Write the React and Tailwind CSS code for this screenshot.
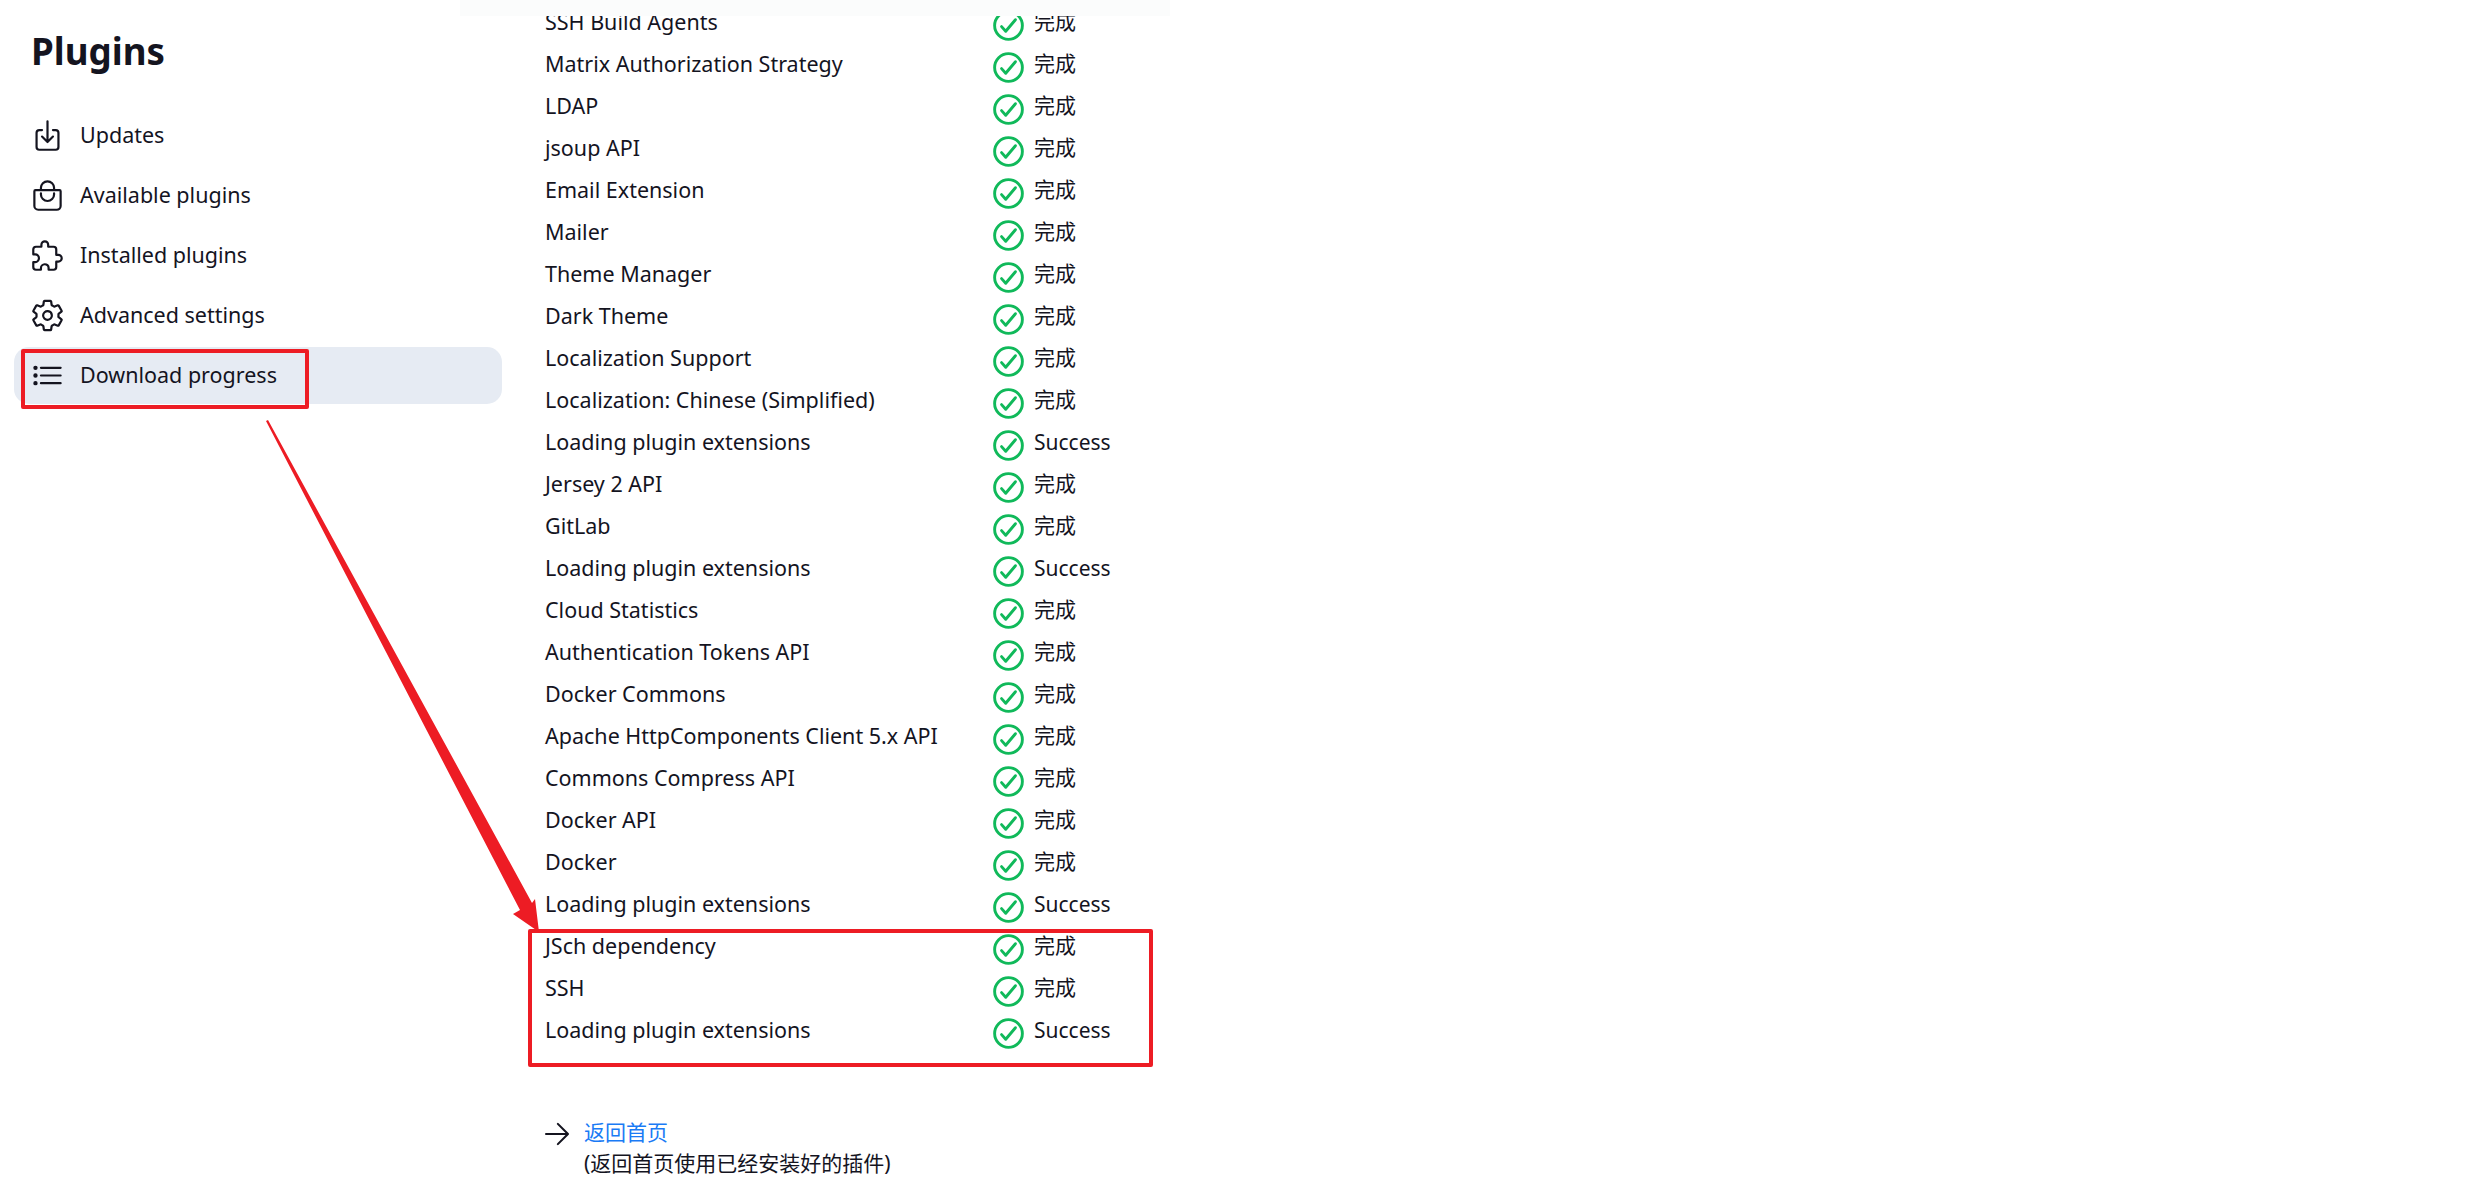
import React from 'react';
import {
  IoArrowForward,
  IoBagHandleOutline,
  IoCheckmarkCircleOutline,
  IoDownloadOutline,
  IoExtensionPuzzleOutline,
  IoListOutline,
  IoSettingsOutline,
} from 'react-icons/io5';

const font = 'font-["Noto_Sans","Noto_Sans_CJK_SC",sans-serif]';

const navItems = [
  { label: 'Updates', Icon: IoDownloadOutline },
  { label: 'Available plugins', Icon: IoBagHandleOutline },
  { label: 'Installed plugins', Icon: IoExtensionPuzzleOutline },
  { label: 'Advanced settings', Icon: IoSettingsOutline },
  { label: 'Download progress', Icon: IoListOutline, active: true },
];

const jobs = [
  ['SSH Build Agents', '完成'],
  ['Matrix Authorization Strategy', '完成'],
  ['LDAP', '完成'],
  ['jsoup API', '完成'],
  ['Email Extension', '完成'],
  ['Mailer', '完成'],
  ['Theme Manager', '完成'],
  ['Dark Theme', '完成'],
  ['Localization Support', '完成'],
  ['Localization: Chinese (Simplified)', '完成'],
  ['Loading plugin extensions', 'Success'],
  ['Jersey 2 API', '完成'],
  ['GitLab', '完成'],
  ['Loading plugin extensions', 'Success'],
  ['Cloud Statistics', '完成'],
  ['Authentication Tokens API', '完成'],
  ['Docker Commons', '完成'],
  ['Apache HttpComponents Client 5.x API', '完成'],
  ['Commons Compress API', '完成'],
  ['Docker API', '完成'],
  ['Docker', '完成'],
  ['Loading plugin extensions', 'Success'],
  ['JSch dependency', '完成'],
  ['SSH', '完成'],
  ['Loading plugin extensions', 'Success'],
];

const Sidebar = () => (
  <aside className="w-[545px] shrink-0 pl-[14px] pt-[23px]">
    <h1 className="pl-[17px] text-[36.7px] leading-[56px] font-bold text-[#14141f]">Plugins</h1>
    <nav className="mt-[28px] flex w-[488px] flex-col gap-[3px]">
      {navItems.map(({ label, Icon, active }) => (
        <div
          key={label}
          className={`flex h-[57px] items-center gap-[15px] rounded-[15px] pl-[16px] text-[21.5px] text-[#14141f] ${active ? 'bg-[#e6ebf3]' : ''}`}
        >
          <Icon className="h-[35px] w-[35px] shrink-0" />
          <span>{label}</span>
        </div>
      ))}
    </nav>
  </aside>
);

const Main = () => (
  <main className="pt-[3px]">
    {jobs.map(([name, status], i) => (
      <div key={i} className="flex h-[42px] items-center text-[#14141f]">
        <span className="w-[445px] shrink-0 -translate-y-[2px] text-[21.5px]">{name}</span>
        <IoCheckmarkCircleOutline className="h-[37px] w-[37px] shrink-0 translate-y-[1px] text-[#10b95a] [&_*]:stroke-[40]" />
        <span className={`ml-[7px] text-[21px] ${status === 'Success' ? '-translate-y-[1.5px]' : '-translate-y-[2px]'}`}>{status}</span>
      </div>
    ))}
    <div className="mt-[65px] flex items-start text-[21px]">
      <IoArrowForward className="-ml-[6px] mt-[-2px] h-[36px] w-[36px] shrink-0 text-[#14141f] [&_*]:stroke-[30]" />
      <div className="ml-[9px]">
        <a className="block leading-[28px] text-[#1a7bf5]">返回首页</a>
        <p className="mt-[3px] leading-[28px] text-[#14141f]">(返回首页使用已经安装好的插件)</p>
      </div>
    </div>
  </main>
);

export default function App() {
  return (
    <div className={`relative flex h-[1183px] w-[2485px] overflow-hidden bg-white ${font}`}>
      <Sidebar />
      <Main />

      <div className="absolute left-[460px] top-0 h-[16px] w-[710px] bg-[#fbfcfc]" />

      {/* red annotations */}
      <div className="absolute left-[21px] top-[349px] h-[60px] w-[288px] rounded-[2px] border-[4px] border-[#ed1c24]" />
      <div className="absolute left-[528px] top-[929px] h-[138px] w-[625px] rounded-[2px] border-[4px] border-[#ed1c24]" />
      <svg className="absolute left-0 top-0" width="600" height="960" viewBox="0 0 600 960">
        <polygon points="266,421 268,420 532,903 535,899 539,932 513,914 520,910" fill="#ed1c24" />
      </svg>
    </div>
  );
}
